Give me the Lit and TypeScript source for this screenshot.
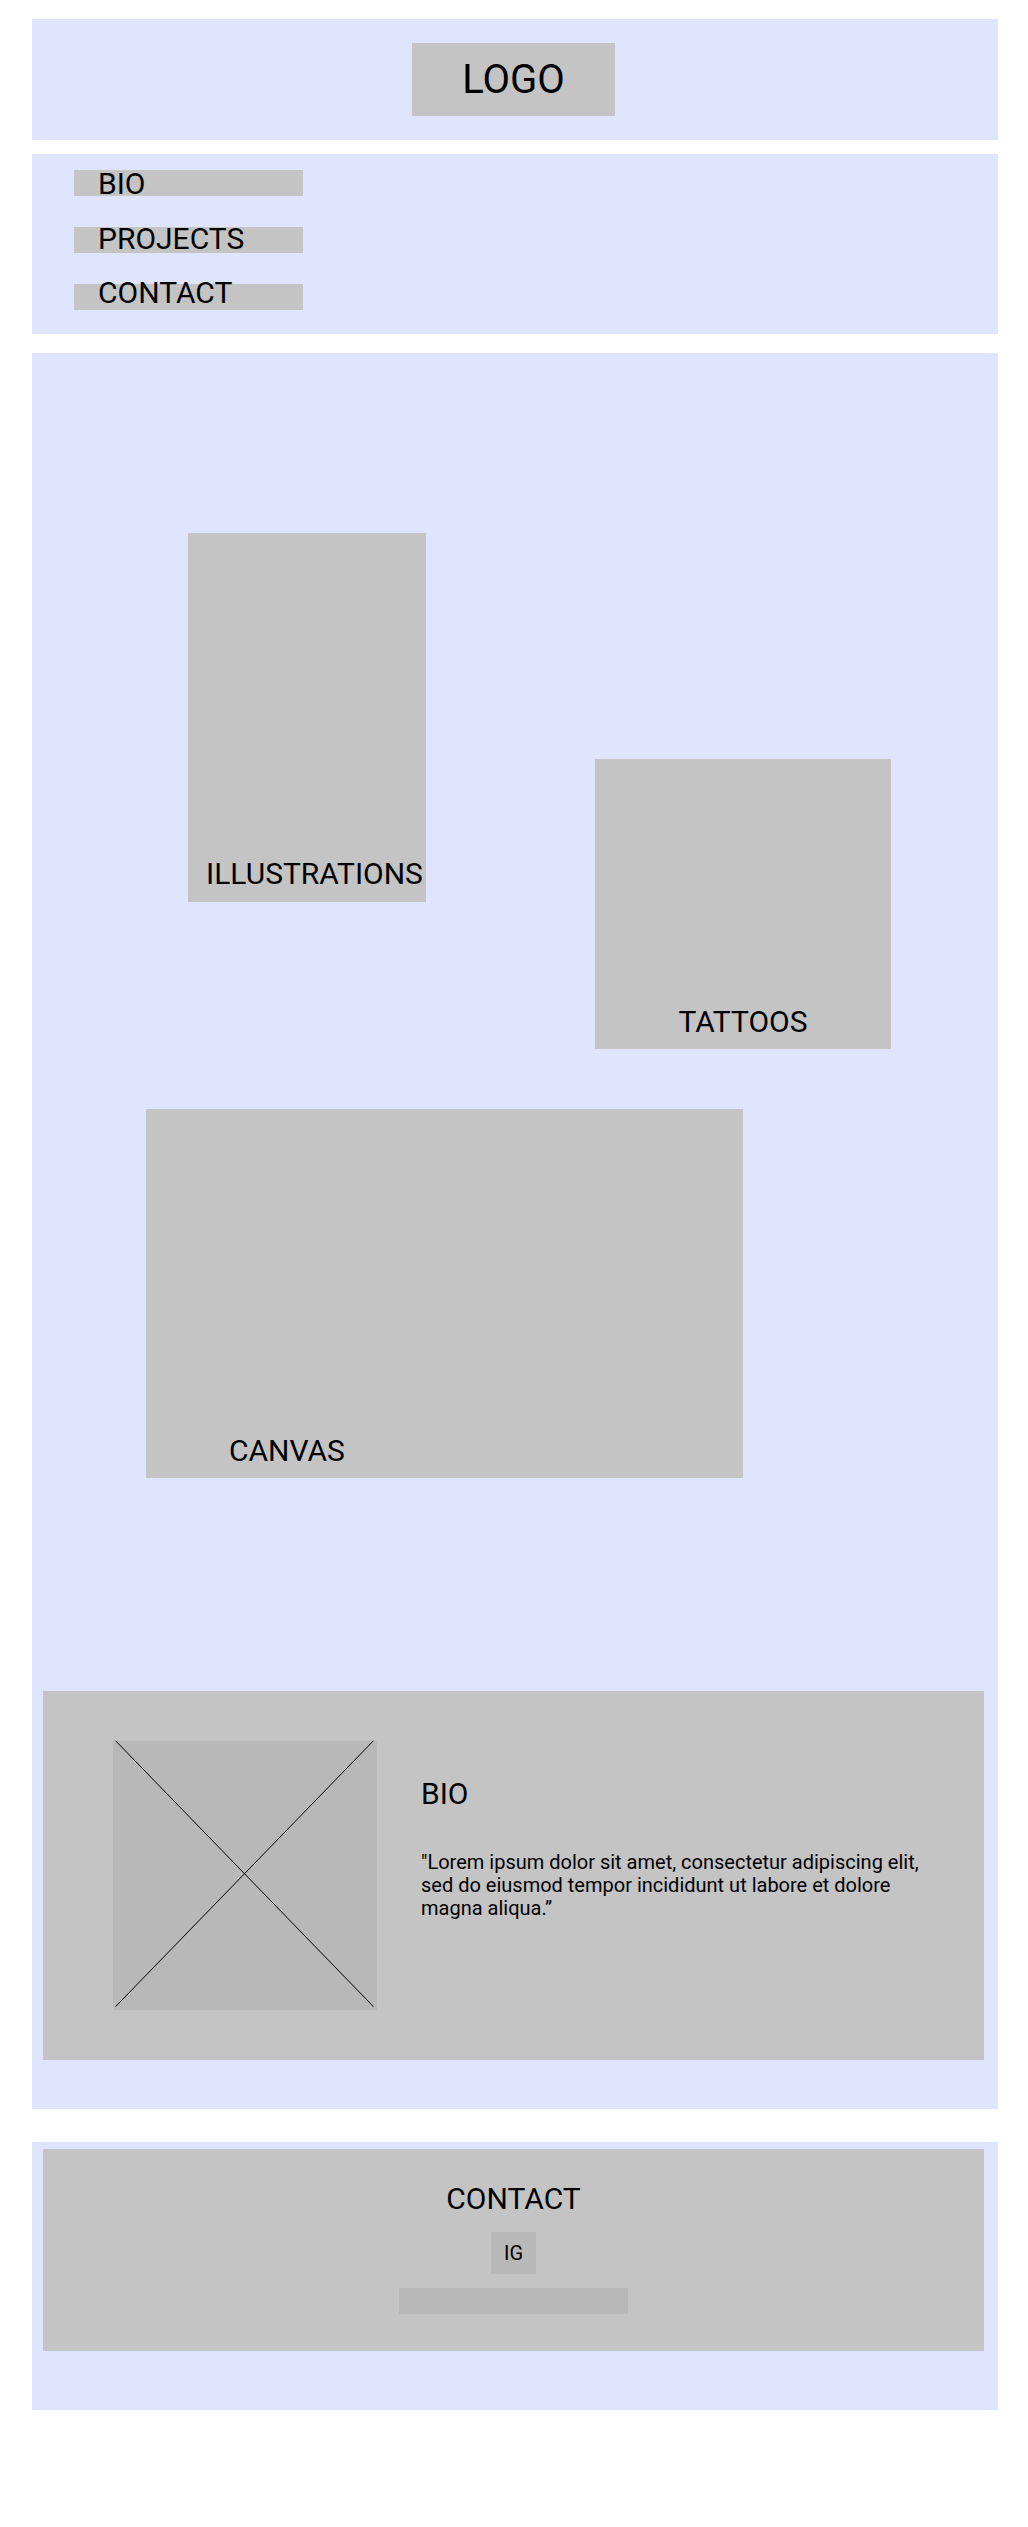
import { LitElement, html, css } from "lit";
import { customElement } from "lit/decorators.js";

interface Entry {
  label: string;
  href: string;
}

interface Project extends Entry {
  kind: string;
}

const NAV: Entry[] = [
  { label: "BIO", href: "#bio" },
  { label: "PROJECTS", href: "#projects" },
  { label: "CONTACT", href: "#contact" },
];

const PROJECTS: Project[] = [
  { label: "ILLUSTRATIONS", href: "#illustrations", kind: "illustrations" },
  { label: "TATTOOS", href: "#tattoos", kind: "tattoos" },
  { label: "CANVAS", href: "#canvas", kind: "canvas" },
];

@customElement("app-root")
export class AppRoot extends LitElement {
  static styles = css`
    :host {
      --panel: #dfe4ff;
      --block: #c4c4c4;
      --block-dark: #b8b8b8;
      display: block;
      box-sizing: border-box;
      padding: 19px 30px 117px 32px;
      background: #ffffff;
      color: #000000;
      font-family: Roboto, "Liberation Sans", sans-serif;
      font-size: 20px;
      line-height: 23px;
    }

    * {
      box-sizing: border-box;
    }

    a {
      color: inherit;
      text-decoration: none;
    }

    h1,
    h2,
    p {
      margin: 0;
      font-weight: 400;
    }

    .title {
      font-size: 30px;
      line-height: 35px;
    }

    .header {
      display: flex;
      justify-content: center;
      padding: 24px 14px 24px 11px;
      background: var(--panel);
    }

    .logo {
      padding: 13px 50px;
      width: 203px;
      background: var(--block);
      font-size: 40px;
      line-height: 47px;
      text-align: center;
    }

    /* Bars and labels share one grid cell; the labels keep their own rhythm. */
    .nav {
      display: grid;
      grid-template-columns: 229px;
      margin-top: 14px;
      padding: 12px 42px 24px;
      background: var(--panel);
    }

    .bars,
    .links {
      grid-area: 1 / 1;
      display: flex;
      flex-direction: column;
    }

    .bars {
      gap: 31px;
      padding-top: 4px;
    }

    .bar {
      height: 26px;
      background: var(--block);
    }

    .links {
      justify-content: space-between;
      padding-left: 24px;
    }

    .main {
      margin-top: 19px;
      padding: 180px 0 49px;
      background: var(--panel);
    }

    .projects {
      display: grid;
      grid-template-columns:
        minmax(0, 114fr) minmax(0, 42fr) minmax(0, 238fr) minmax(0, 169fr)
        minmax(0, 148fr) minmax(0, 148fr) minmax(0, 107fr);
      grid-template-rows: 226px 143px 147px 60px 369px;
    }

    .project {
      display: flex;
      align-items: flex-end;
      padding-bottom: 10px;
      background: var(--block);
    }

    .illustrations {
      grid-area: 1 / 3 / 3 / 4;
      padding-bottom: 11px;
      padding-left: 18px;
    }

    .tattoos {
      grid-area: 2 / 5 / 4 / 7;
      justify-content: center;
    }

    .canvas {
      grid-area: 5 / 2 / 6 / 6;
      padding-left: 83px;
    }

    .bio {
      display: flex;
      gap: 44px;
      margin: 213px 14px 0 11px;
      padding: 50px 50px 50px 70px;
      background: var(--block);
    }

    .portrait {
      flex: none;
      display: block;
      width: 264px;
      height: 269px;
      overflow: visible;
      background: var(--block-dark);
    }

    .about {
      display: flex;
      flex-direction: column;
      gap: 40px;
      padding-top: 35px;
    }

    .footer {
      margin-top: 33px;
      padding: 7px 14px 59px 11px;
      background: var(--panel);
    }

    .contact {
      display: flex;
      flex-direction: column;
      align-items: center;
      padding: 32px 20px 37px;
      background: var(--block);
    }

    .social {
      display: flex;
      align-items: center;
      justify-content: center;
      margin: 16px 0 14px;
      width: 45px;
      height: 42px;
      background: var(--block-dark);
    }

    .email {
      display: block;
      width: 229px;
      height: 26px;
      padding: 0 8px;
      border: 0;
      border-radius: 0;
      background: var(--block-dark);
      font: inherit;
    }
  `;

  render() {
    return html`
      <header class="header">
        <h1 class="logo">LOGO</h1>
      </header>

      <nav class="nav">
        <div class="bars">${NAV.map(() => html`<div class="bar"></div>`)}</div>
        <div class="links">
          ${NAV.map((item) => html`<a class="title" href=${item.href}>${item.label}</a>`)}
        </div>
      </nav>

      <main class="main">
        <section class="projects" id="projects">
          ${PROJECTS.map(
            (project) => html`
              <a class="project title ${project.kind}" href=${project.href}>${project.label}</a>
            `,
          )}
        </section>

        <section class="bio" id="bio">
          <svg class="portrait" viewBox="0 0 264 269" aria-hidden="true">
            <path d="M2.5 -0.3L260.5 265.7M260.5 -0.3L2.5 265.7" fill="none" stroke="#000000" />
          </svg>
          <div class="about">
            <h2 class="title">BIO</h2>
            <p>
              "Lorem ipsum dolor sit amet, consectetur adipiscing elit, sed do eiusmod tempor
              incididunt ut labore et dolore magna aliqua.”
            </p>
          </div>
        </section>
      </main>

      <footer class="footer">
        <section class="contact" id="contact">
          <h2 class="title">CONTACT</h2>
          <a class="social" href="#instagram">IG</a>
          <input class="email" type="email" aria-label="Email" />
        </section>
      </footer>
    `;
  }
}
